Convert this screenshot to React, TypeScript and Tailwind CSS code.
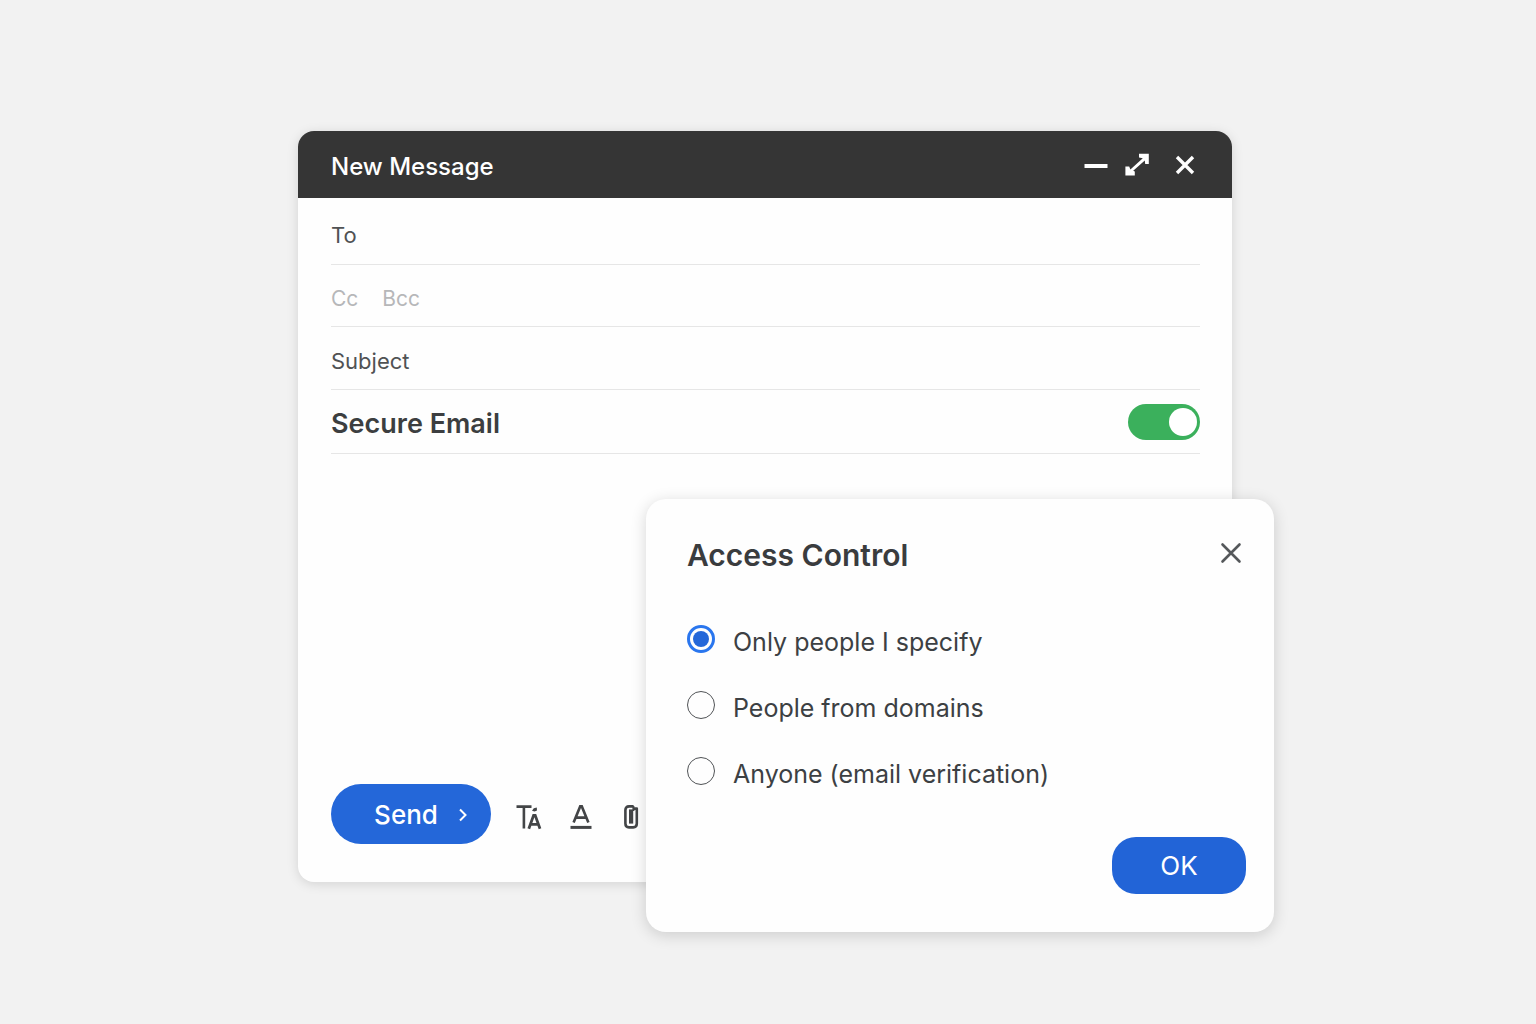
import { useState } from "react";

const ACCESS_OPTIONS = [
  { value: "specific", label: "Only people I specify" },
  { value: "domains", label: "People from domains" },
  { value: "anyone", label: "Anyone (email verification)" },
];

const MinimizeIcon = () => (
  <svg viewBox="0 0 24 24" className="w-6 h-6" fill="none" stroke="currentColor" strokeWidth="4">
    <path d="M0.5 13H23.5" />
  </svg>
);

const ExpandIcon = () => (
  <svg viewBox="0 0 24 24" className="w-6 h-6" fill="currentColor">
    <path d="M14 0.8H23.8V11H20.2L19.8 7.4L8.2 17.8L9.8 18.6V22.6H0.4V13.6H4.2L5.4 16.4L17.8 5.2L14 4.6Z" />
  </svg>
);

const TextSizeIcon = () => (
  <svg viewBox="0 0 26 26" className="w-[26px] h-[26px]" fill="none" stroke="currentColor" strokeWidth="2.6">
    <path d="M0.5 2.6H15.5M7.9 2.6V24.5" />
    <path d="M12.8 24.8L17.6 11.4H19.2L24 24.8M14.4 20.4H22.4" strokeWidth="2.8" />
    <path d="M16 6.8L17.8 4.2L20.8 3.6L21 6.6L18.6 7.4Z" fill="currentColor" stroke="none" />
  </svg>
);

const TextColorIcon = () => (
  <svg viewBox="0 0 24 26" className="w-6 h-[26px]" fill="none" stroke="currentColor" strokeWidth="2.6">
    <path d="M4.6 18.6L11.2 2.4H12.8L19.4 18.6M7 13.6H17" />
    <path d="M1.5 23.4H22.5" strokeWidth="3" />
  </svg>
);

const AttachIcon = () => (
  <svg viewBox="-3 0 22 26" className="w-[22px] h-[26px]" fill="none" stroke="currentColor" strokeWidth="2.6">
    <path d="M10.6 2.4H6Q2.4 2.4 2.4 6V19.6Q2.4 23.4 6 23.4H10.2Q13.8 23.4 13.8 19.6V4.6H10.6" strokeLinejoin="round" />
    <path d="M6 5.4H10.2V19.6H6Z" fill="currentColor" stroke="none" />
    <path d="M10.4 2V7" strokeWidth="2" />
  </svg>
);

const App = () => {
  const [secure, setSecure] = useState(true);
  const [access, setAccess] = useState("specific");
  const [dialogOpen, setDialogOpen] = useState(true);

  return (
    <div className="min-h-screen w-full bg-[#f2f2f2] flex justify-center items-start pt-[131px] pb-24 pl-12 pr-[54px] font-['Inter','Noto_Sans',sans-serif] text-[#3c4043]">

      {/* Compose window */}
      <main className="relative w-full max-w-[934px] rounded-2xl bg-[#fefefe] shadow-[0_2px_12px_rgba(0,0,0,0.13)]">

        {/* Title bar */}
        <header className="h-[67px] px-[33px] flex items-center justify-between rounded-t-2xl bg-[#353535] text-white">
          <h1 className="text-[24px] font-medium pt-1">New Message</h1>
          <div className="flex items-center">
            <button type="button" aria-label="Minimize" className="mr-[17px]"><MinimizeIcon /></button>
            <button type="button" aria-label="Expand" className="mr-[26px]"><ExpandIcon /></button>
            <button type="button" aria-label="Close message" className="mr-1">
              <svg viewBox="0 0 20 20" className="w-5 h-5" fill="none" stroke="currentColor" strokeWidth="3.4">
                <path d="M2 2L18 18M18 2L2 18" />
              </svg>
            </button>
          </div>
        </header>

        {/* Fields */}
        <div className="px-8 text-[22px] text-[#505254]">
          <div className="ml-px flex items-center gap-6 h-[67px] pt-2 border-b border-[#e6e6e6]">
            <label htmlFor="to">To</label>
            <input id="to" type="text" className="flex-1 min-w-0 outline-none" />
          </div>
          <div className="ml-px flex items-center gap-6 h-[62px] pt-1.5 border-b border-[#e6e6e6] text-[21px] text-[#b6b7b9]">
            <button type="button">Cc</button>
            <button type="button">Bcc</button>
          </div>
          <div className="ml-px flex items-center gap-6 h-[63px] pt-1.5 border-b border-[#e6e6e6]">
            <label htmlFor="subject">Subject</label>
            <input id="subject" type="text" className="flex-1 min-w-0 outline-none" />
          </div>
          <div className="ml-px flex items-center justify-between h-16 border-b border-[#e6e6e6]">
            <label htmlFor="secure" className="pt-1.5 text-[27px] font-semibold text-[#3c3e40]">Secure Email</label>
            <input
              id="secure"
              type="checkbox"
              role="switch"
              checked={secure}
              onChange={(e) => setSecure(e.target.checked)}
              className="appearance-none w-[72px] h-9 px-[3px] flex items-center rounded-full bg-gray-300 checked:bg-[#3bb05c] checked:justify-end before:block before:w-7 before:h-7 before:rounded-full before:bg-white"
            />
          </div>
        </div>

        <textarea aria-label="Message body" className="block w-full h-[330px] px-[33px] py-4 text-[22px] resize-none outline-none" />

        {/* Toolbar */}
        <footer className="flex items-center px-[33px] pb-[38px]">
          <button type="button" className="w-40 h-[60px] pl-5 flex items-center justify-center gap-5 rounded-full bg-[#2467d9] text-white text-[26px] font-medium">
            Send
            <svg viewBox="0 0 10 14" className="w-[10px] h-[14px] mt-0.5" fill="none" stroke="currentColor" strokeWidth="2">
              <path d="M2 1.5L7.5 7L2 12.5" />
            </svg>
          </button>
          <div className="flex items-center gap-[27px] ml-[25px] pt-1.5 text-[#434547]">
            <button type="button" aria-label="Text size"><TextSizeIcon /></button>
            <button type="button" aria-label="Text color"><TextColorIcon /></button>
            <button type="button" aria-label="Attach file"><AttachIcon /></button>
          </div>
        </footer>

        {/* Access control dialog */}
        {dialogOpen && (
          <section
            role="dialog"
            aria-labelledby="access-title"
            className="absolute -right-[42px] -bottom-[50px] w-[628px] max-w-full rounded-[20px] bg-[#fefefe] pt-9 pb-[38px] pl-[41px] pr-7 shadow-[0_3px_16px_rgba(0,0,0,0.16)]"
          >
            <div className="flex items-center justify-between">
              <h2 id="access-title" className="text-[30px] leading-10 font-semibold text-[#3a3c3e]">Access Control</h2>
              <button type="button" aria-label="Close dialog" className="mr-1 mb-1 text-[#55585b]" onClick={() => setDialogOpen(false)}>
                <svg viewBox="0 0 22 22" className="w-[22px] h-[22px]" fill="none" stroke="currentColor" strokeWidth="2.6" strokeLinecap="round">
                  <path d="M2.5 2.5L19.5 19.5M19.5 2.5L2.5 19.5" />
                </svg>
              </button>
            </div>

            <fieldset aria-labelledby="access-title" className="mt-[50px] flex flex-col gap-8">
              {ACCESS_OPTIONS.map((option) => (
                <label key={option.value} className="flex items-start gap-[18px] text-[25px] leading-[34px]">
                  <input
                    type="radio"
                    name="access"
                    value={option.value}
                    checked={access === option.value}
                    onChange={() => setAccess(option.value)}
                    className="appearance-none shrink-0 w-7 h-7 rounded-full border border-[#505356] checked:border-[3px] checked:border-[#2a76ee] checked:p-[3px] checked:bg-[#2467d9] checked:bg-clip-content"
                  />
                  {option.label}
                </label>
              ))}
            </fieldset>

            <div className="mt-[46px] flex justify-end">
              <button type="button" className="w-[134px] h-[57px] rounded-3xl bg-[#2264d7] text-white text-[26px]" onClick={() => setDialogOpen(false)}>
                OK
              </button>
            </div>
          </section>
        )}
      </main>
    </div>
  );
};

export default App;
